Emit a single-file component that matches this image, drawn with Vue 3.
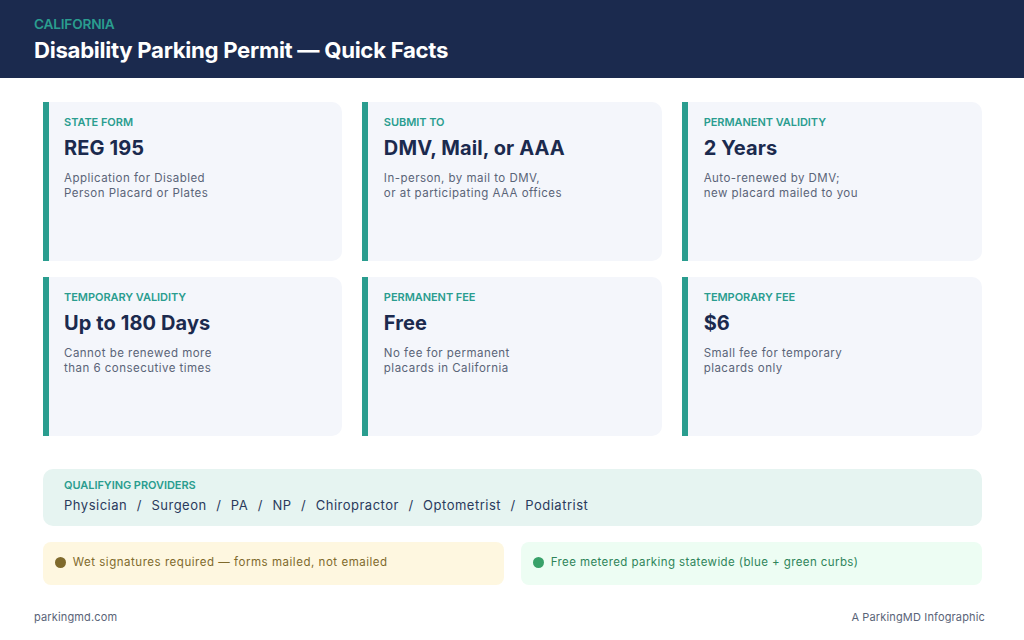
<template>
  <div class="page">
    <header class="header">
      <div class="state">CALIFORNIA</div>
      <h1 class="title">Disability Parking Permit — Quick Facts</h1>
    </header>

    <main class="content">
      <section class="cards">
        <div v-for="card in cards" :key="card.label" class="card">
          <div class="card-label">{{ card.label }}</div>
          <div class="card-value">{{ card.value }}</div>
          <div class="card-desc">{{ card.line1 }}<br />{{ card.line2 }}</div>
        </div>
      </section>

      <section class="providers">
        <div class="card-label">QUALIFYING PROVIDERS</div>
        <div class="provider-list">Physician &nbsp;/&nbsp; Surgeon &nbsp;/&nbsp; PA &nbsp;/&nbsp; NP &nbsp;/&nbsp; Chiropractor &nbsp;/&nbsp; Optometrist &nbsp;/&nbsp; Podiatrist</div>
      </section>

      <section class="notes">
        <div class="note note-amber">
          <span class="dot"></span>
          Wet signatures required — forms mailed, not emailed
        </div>
        <div class="note note-green">
          <span class="dot"></span>
          Free metered parking statewide (blue + green curbs)
        </div>
      </section>
    </main>

    <footer class="footer">
      <span>parkingmd.com</span>
      <span>A ParkingMD Infographic</span>
    </footer>
  </div>
</template>

<script setup>
const cards = [
  { label: 'STATE FORM', value: 'REG 195', line1: 'Application for Disabled', line2: 'Person Placard or Plates' },
  { label: 'SUBMIT TO', value: 'DMV, Mail, or AAA', line1: 'In-person, by mail to DMV,', line2: 'or at participating AAA offices' },
  { label: 'PERMANENT VALIDITY', value: '2 Years', line1: 'Auto-renewed by DMV;', line2: 'new placard mailed to you' },
  { label: 'TEMPORARY VALIDITY', value: 'Up to 180 Days', line1: 'Cannot be renewed more', line2: 'than 6 consecutive times' },
  { label: 'PERMANENT FEE', value: 'Free', line1: 'No fee for permanent', line2: 'placards in California' },
  { label: 'TEMPORARY FEE', value: '$6', line1: 'Small fee for temporary', line2: 'placards only' }
];
</script>

<style scoped>
.page {
  width: 1024px;
  height: 640px;
  display: flex;
  flex-direction: column;
  background: #ffffff;
  font-family: Inter, "Liberation Sans", sans-serif;
  overflow: hidden;
}

.header {
  height: 77.5px;
  box-sizing: border-box;
  padding: 16px 34px 0;
  background: #1b2a4e;
}

.state {
  font-size: 13.65px;
  line-height: 17px;
  font-weight: 600;
  letter-spacing: -0.2px;
  color: #2a9d8f;
}

.title {
  margin: 2px 0 0;
  font-size: 22.2px;
  line-height: 30px;
  font-weight: 700;
  letter-spacing: -0.3px;
  color: #ffffff;
}

.content {
  padding: 24.5px 42.4px 0 42.67px;
}

.cards {
  display: grid;
  grid-template-columns: repeat(3, 1fr);
  grid-auto-rows: 159px;
  gap: 16px 20.5px;
}

.card {
  box-sizing: border-box;
  padding: 13px 16px 0 15.4px;
  background: #f4f6fb;
  border-left: 6px solid #2a9d8f;
  border-radius: 0 10px 10px 0;
}

.card-label {
  font-size: 11px;
  line-height: 14px;
  font-weight: 600;
  letter-spacing: -0.05px;
  color: #2a9d8f;
}

.card-value {
  margin-top: 6px;
  font-size: 20px;
  line-height: 27px;
  font-weight: 700;
  letter-spacing: 0.1px;
  color: #1b2a4e;
}

.card-desc {
  margin-top: 9px;
  font-size: 11.5px;
  line-height: 15px;
  letter-spacing: 0.47px;
  color: #5a6478;
}

.providers {
  box-sizing: border-box;
  height: 56.5px;
  margin-top: 33px;
  padding: 9px 21.4px 0;
  background: #e6f4f1;
  border-radius: 10px;
}

.provider-list {
  margin-top: 4px;
  font-size: 13px;
  line-height: 18px;
  letter-spacing: 0.5px;
  word-spacing: 0.6px;
  color: #2a3a5c;
}

.notes {
  display: flex;
  gap: 17px;
  margin-top: 16.5px;
}

.note {
  flex: 1;
  height: 43px;
  box-sizing: border-box;
  padding: 0 12px 3px;
  display: flex;
  align-items: center;
  gap: 7px;
  border-radius: 8px;
  font-size: 11.5px;
}

.note-amber {
  background: #fef7e0;
  color: #7f6a2c;
  letter-spacing: 0.53px;
}

.note-green {
  background: #edfdf3;
  color: #2f855a;
  letter-spacing: 0.41px;
}

.dot {
  width: 11px;
  height: 11px;
  flex-shrink: 0;
  border-radius: 50%;
  background: currentColor;
}

.note-green .dot {
  background: #38a169;
}

.footer {
  display: flex;
  justify-content: space-between;
  margin-top: 25px;
  padding: 0 39px 0 34px;
  font-size: 11px;
  line-height: 14px;
  letter-spacing: 0.15px;
  color: #5a6478;
}
</style>
